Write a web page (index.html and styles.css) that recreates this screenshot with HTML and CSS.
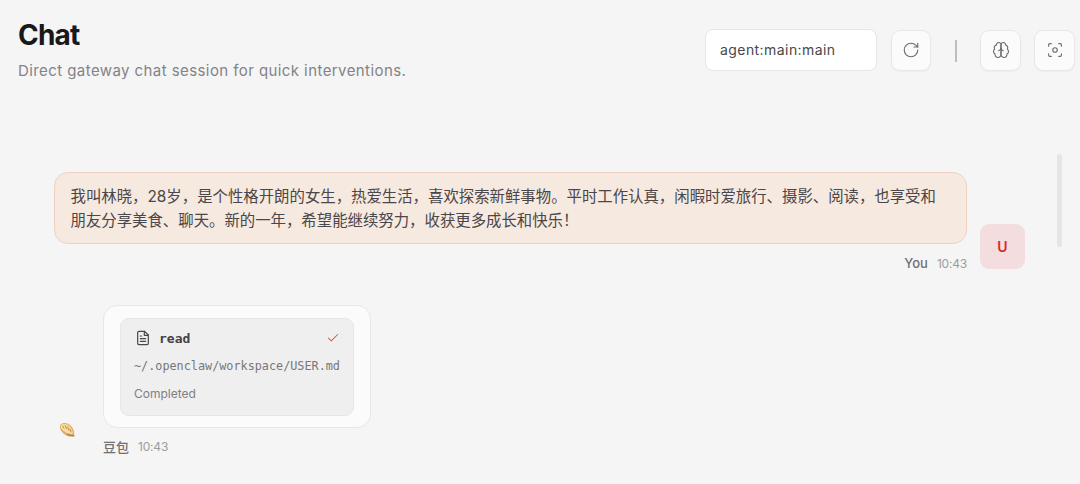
FILE: index.html
```html
<!DOCTYPE html>
<html lang="en">
<head>
  <meta charset="UTF-8">
  <meta name="viewport" content="width=device-width, initial-scale=1.0">
  <title>Chat</title>
  <link rel="stylesheet" href="styles.css">
</head>
<body>
  <!-- Page header -->
  <header class="page-header">
    <div class="heading">
      <h1 class="page-title">Chat</h1>
      <p class="page-sub">Direct gateway chat session for quick interventions.</p>
    </div>
    <div class="controls">
      <div class="session-select"><span>agent:main:main</span></div>
      <button class="icon-btn refresh" aria-label="Refresh">
        <svg viewBox="0 0 24 24"><path d="M21 12a9 9 0 1 1-9-9c2.52 0 4.93 1 6.74 2.74L21 8"/><path d="M21 3v5h-5"/></svg>
      </button>
      <span class="separator"></span>
      <button class="icon-btn" aria-label="Toggle thinking">
        <svg viewBox="0 0 24 24"><path d="M12 5a3 3 0 1 0-5.997.125 4 4 0 0 0-2.526 5.77 4 4 0 0 0 .556 6.588A4 4 0 1 0 12 18Z"/><path d="M12 5a3 3 0 1 1 5.997.125 4 4 0 0 1 2.526 5.77 4 4 0 0 1-.556 6.588A4 4 0 1 1 12 18Z"/><path d="M15 13a4.5 4.5 0 0 1-3-4 4.5 4.5 0 0 1-3 4"/></svg>
      </button>
      <button class="icon-btn" aria-label="Focus mode">
        <svg viewBox="0 0 24 24"><path d="M3.5 7V5A1.5 1.5 0 0 1 5 3.5h2M17 3.5h2A1.5 1.5 0 0 1 20.5 5v2M20.5 17v2a1.5 1.5 0 0 1-1.5 1.5h-2M7 20.5H5A1.5 1.5 0 0 1 3.5 19v-2"/><circle cx="12" cy="12" r="3"/></svg>
      </button>
    </div>
  </header>

  <!-- Chat thread -->
  <main class="thread">
    <div class="messages">
      <div class="group user">
        <div class="group-body">
          <div class="bubble" lang="zh-CN">我叫林晓，28岁，是个性格开朗的女生，热爱生活，喜欢探索新鲜事物。平时工作认真，闲暇时爱旅行、摄影、阅读，也享受和<br>朋友分享美食、聊天。新的一年，希望能继续努力，收获更多成长和快乐！</div>
          <div class="meta"><span class="sender">You</span><span class="time">10:43</span></div>
        </div>
        <div class="avatar">U</div>
      </div>

      <div class="group assistant">
        <div class="avatar">
          <svg class="bread" viewBox="0 0 18 18">
            <path d="M2 4.5C2.5 2.300 5 1.600 7.500 2c3.600.6 6.400 3 7.800 6.300.8 2.200 1 4.600.9 7-2.900.7-6.500.1-9.400-1.900C3.500 11.200 1.300 8 2 4.500Z" fill="#dfac68"/>
            <path d="M2.600 4.800C3.400 2.700 6 2.600 8.400 3.300c3.400 1 5.800 4.300 6.600 9.100-3.500.8-6.900-.2-9.200-2.300C3.600 8.200 2.200 6.600 2.600 4.800Z" fill="#f8dfa0"/>
            <path d="M4.800 5.100l1 1.900M7.200 4.600l1.300 3.200M9.700 5.700l1.200 3.500M12.100 8l.9 2.800" fill="none" stroke="#bd8046" stroke-width=".9" stroke-linecap="round"/>
            <path d="M9.500 13.500c1.800.9 3.900 1.300 6.400 1.300" fill="none" stroke="#a97852" stroke-width="1.200"/>
          </svg>
        </div>
        <div class="group-body">
          <div class="bubble">
            <div class="tool-card">
              <div class="tool-head">
                <svg class="tool-icon" viewBox="0 0 24 24"><path d="M14.500 2H6a2 2 0 0 0-2 2v16a2 2 0 0 0 2 2h12a2 2 0 0 0 2-2V7.500L14.500 2z"/><path d="M14 2v6h6M16 13H8M16 17H8M10 9H8"/></svg>
                <span class="tool-name">read</span>
                <svg class="tool-check" viewBox="0 0 24 24"><path d="M20 6 9 17l-5-5"/></svg>
              </div>
              <div class="tool-path">~/.openclaw/workspace/USER.md</div>
              <div class="tool-status">Completed</div>
            </div>
          </div>
          <div class="meta"><span class="sender" lang="zh-CN">豆包</span><span class="time">10:43</span></div>
        </div>
      </div>
    </div>
    <div class="scrollbar"></div>
  </main>
</body>
</html>
```
FILE: styles.css
```css
* {
  box-sizing: border-box;
}
body {
  margin: 0;
  height: 484px;
  overflow: hidden;
  background: #f5f5f5;
  color: #4a4649;
  font-family: "Inter", "Noto Sans CJK SC", sans-serif;
}
svg {
  display: block;
  fill: none;
  stroke: currentColor;
  stroke-width: 1.5;
  stroke-linecap: round;
  stroke-linejoin: round;
}

/* Header */
.page-header {
  display: flex;
  justify-content: space-between;
  height: 154px;
  padding: 18px 5px 0 18px;
}
.page-title {
  margin: 0;
  font-size: 28px;
  line-height: 34px;
  font-weight: 700;
  letter-spacing: -0.8px;
  color: #19191b;
}
.page-sub {
  margin: 8px 0 0;
  font-size: 15px;
  line-height: 22px;
  letter-spacing: 0.42px;
  color: #838387;
}
.controls {
  display: flex;
  align-items: center;
  height: 42px;
  margin-top: 11px;
}
.session-select {
  display: flex;
  align-items: center;
  width: 172px;
  height: 42px;
  padding: 0 14px 1px;
  margin-right: 14px;
  border: 1px solid #e6e6e6;
  border-radius: 8px;
  background: #fff;
  color: #48484b;
  font-size: 14px;
  letter-spacing: 0.43px;
}
.icon-btn {
  display: flex;
  align-items: center;
  justify-content: center;
  width: 41px;
  height: 41px;
  padding: 0;
  border: 1px solid #e8e8e8;
  border-radius: 9px;
  background: #fbfbfb;
  box-shadow: 0 1px 2px rgba(0, 0, 0, 0.04);
  color: #6c6c70;
}
.icon-btn.refresh {
  width: 40px;
}
.icon-btn + .icon-btn {
  margin-left: 13px;
}
.icon-btn svg {
  width: 18px;
  height: 18px;
}
.separator {
  width: 2px;
  height: 22px;
  margin: 2px 23px 0 24px;
  background: #bdbdbd;
}

/* Thread */
.thread {
  display: flex;
  justify-content: space-between;
  padding: 0 19px 0 44px;
}
.messages {
  width: 981px;
  padding-top: 18px;
}
.group {
  display: flex;
  align-items: flex-end;
}
.group.user {
  justify-content: flex-end;
  gap: 13px;
}
.user .bubble {
  width: 913px;
  height: 72px;
  padding: 12px 15.5px;
  border: 1px solid #f2cfc3;
  border-radius: 14px;
  background: #f6e9df;
  font-size: 15.4px;
  line-height: 24px;
  white-space: nowrap;
}
.meta {
  display: flex;
  align-items: center;
  gap: 9px;
  height: 18px;
  margin-top: 10px;
  font-size: 13px;
  color: #707073;
}
.user .meta {
  justify-content: flex-end;
}
.sender {
  font-weight: 500;
}
.time {
  font-size: 12px;
  letter-spacing: -0.2px;
  color: #9c9c9f;
}
.avatar {
  display: flex;
  align-items: center;
  justify-content: center;
  width: 45px;
  height: 45px;
  border-radius: 9px;
  font-size: 14px;
  font-weight: 600;
}
.user .avatar {
  margin-bottom: 3px;
  background: #f3dddf;
  color: #d92a2f;
}
.group.assistant {
  gap: 14px;
  margin-top: 33px;
}
.assistant .avatar {
  margin-bottom: 4px;
}
.assistant .meta {
  height: 20px;
  margin-top: 8px;
  padding-top: 1px;
}
.bread {
  width: 18px;
  height: 18px;
  stroke: none;
}
.assistant .bubble {
  width: 268px;
  height: 123px;
  padding: 12px 16px;
  border: 1px solid #e7e7e7;
  border-radius: 14px;
  background: #fbfbfb;
}
.tool-card {
  height: 98px;
  padding: 9px 13px;
  border: 1px solid #e6e6e6;
  border-radius: 9px;
  background: #efefef;
}
.tool-head {
  display: flex;
  align-items: center;
  height: 20px;
}
.tool-icon {
  width: 16px;
  height: 16px;
  margin: 0 8px 0 1px;
  stroke-width: 1.8;
}
.tool-name {
  font-family: "DejaVu Sans Mono", monospace;
  font-size: 13px;
  font-weight: 700;
  color: #434246;
}
.tool-check {
  width: 14px;
  height: 14px;
  margin-left: auto;
  color: #dc5256;
  stroke-width: 1.8;
}
.tool-path {
  margin-top: 9px;
  font-family: "DejaVu Sans Mono", monospace;
  font-size: 11.8px;
  line-height: 18px;
  white-space: nowrap;
  color: #777779;
}
.tool-status {
  margin-top: 10px;
  font-size: 12px;
  line-height: 18px;
  color: #808083;
}
.scrollbar {
  width: 5px;
  height: 93px;
  margin-right: -1px;
  border-radius: 3px;
  background: #e5e5e5;
}
```
